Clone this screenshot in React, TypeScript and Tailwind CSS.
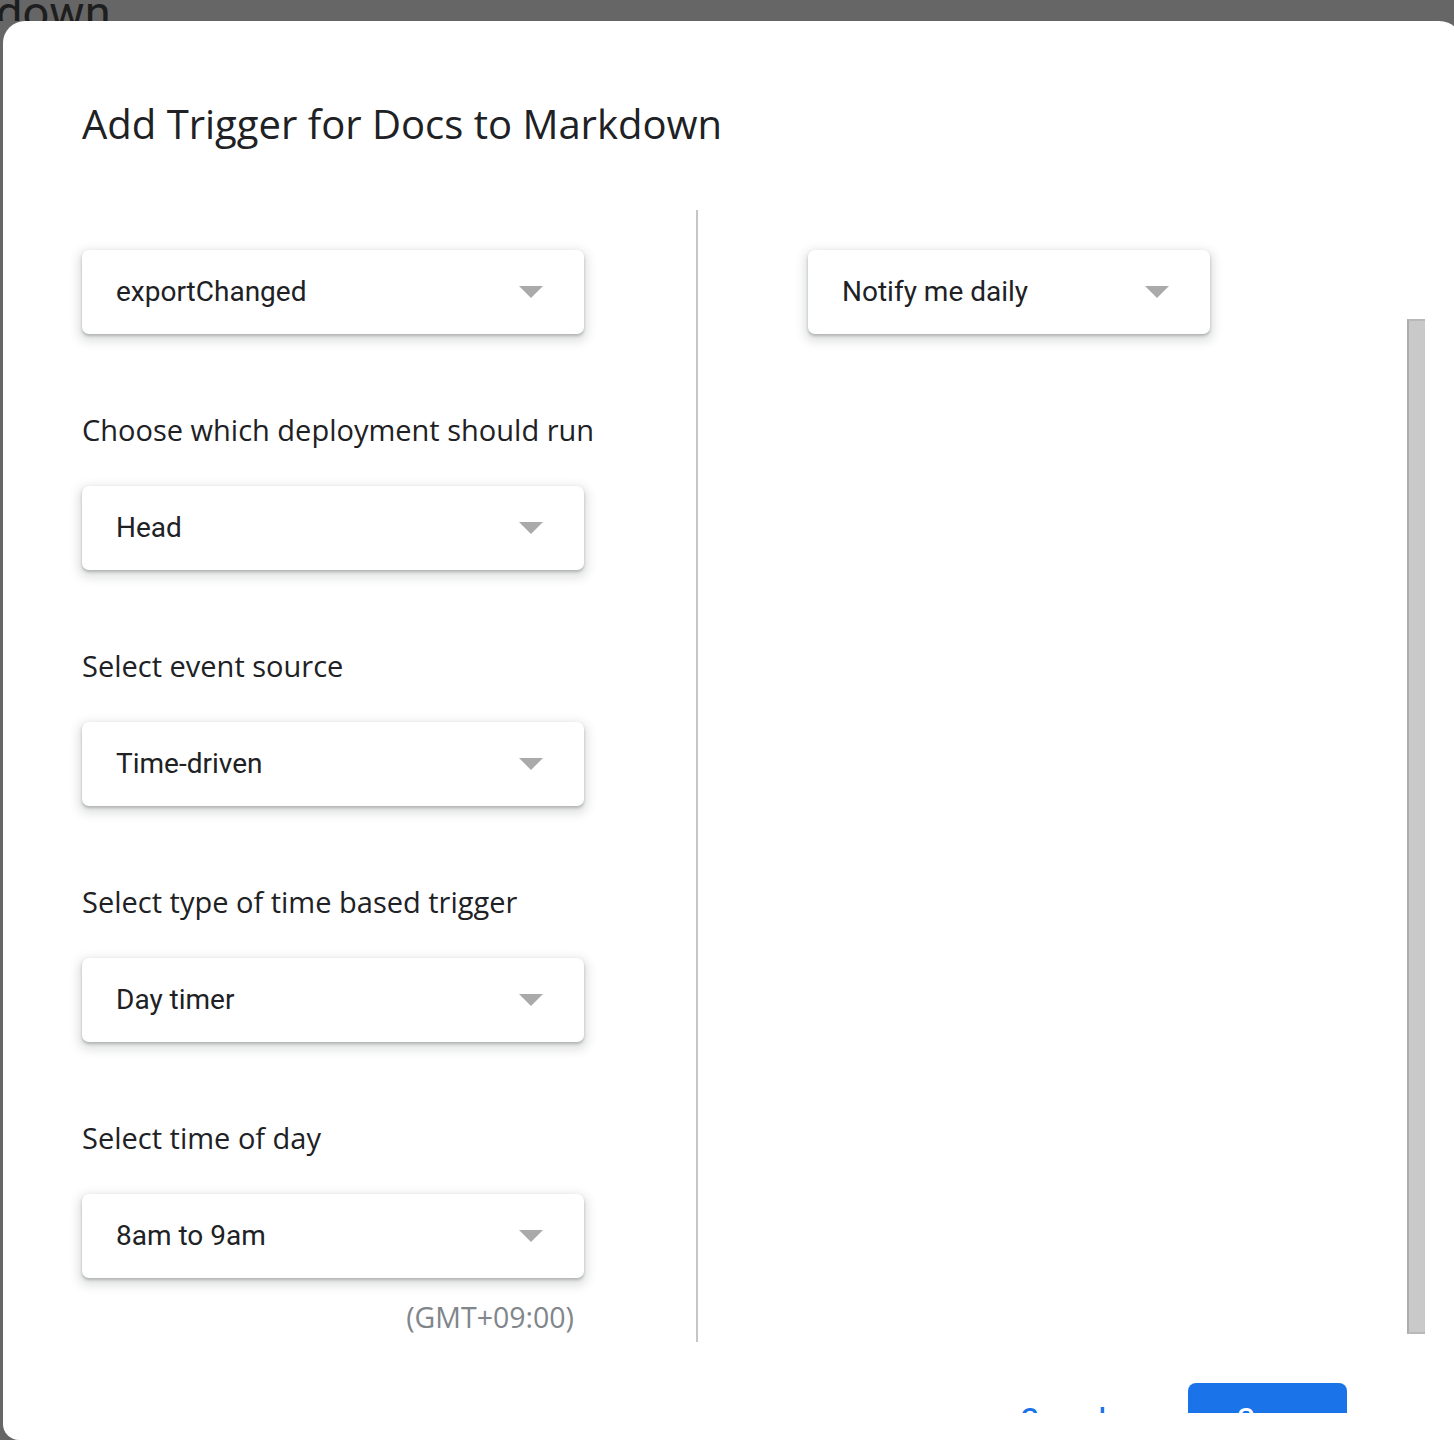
import React from 'react';

const sans = "font-['Roboto','Liberation_Sans',sans-serif]";
const display = "font-['Open_Sans','Liberation_Sans',sans-serif]";

const Arrow = () => (
  <svg width="24" height="12" viewBox="0 0 24 12" className="shrink-0">
    <path d="M0 0 L24 0 L12 12 Z" fill="#aaaaaa" />
  </svg>
);

interface SelectProps {
  value: string;
  width: string;
}

const Select: React.FC<SelectProps> = ({ value, width }) => (
  <div
    className={`${width} h-[84px] rounded-[7px] bg-white flex items-center justify-between pl-[34px] pr-[41px] shadow-[0_2px_3px_rgba(60,64,67,0.3),0_4px_10px_4px_rgba(60,64,67,0.15)]`}
  >
    <span className="text-[28px] text-[#202124] leading-none">{value}</span>
    <Arrow />
  </div>
);

const Label: React.FC<{ children: React.ReactNode }> = ({ children }) => (
  <div className={`${display} mt-[78px] mb-[38px] h-[36px] leading-[36px] text-[29px] text-[#202124]`}>{children}</div>
);

export default function App() {
  return (
    <div className={`w-[1454px] h-[1440px] overflow-hidden bg-[#666666] ${sans}`}>
      {/* page behind the dialog */}
      <div className="h-[21px] overflow-hidden">
        <div className="-mt-[11px] -ml-[4px] text-[47px] leading-[47px] text-[#1e1e1e]">down</div>
      </div>

      <div className="ml-[3px] w-[1460px] h-[1419px] bg-white rounded-tl-[22px] rounded-tr-[24px] rounded-bl-[16px] flex flex-col">
        <h1 className={`${display} mt-[79px] pl-[79px] h-[48px] leading-[48px] text-[40px] text-[#202124]`}>
          Add Trigger for Docs to Markdown
        </h1>

        <div className="mt-[62px] h-[1132px] flex">
          {/* left column */}
          <div className="pl-[79px] w-[693px] pt-[40px] flex flex-col">
            <Select value="exportChanged" width="w-[502px]" />
            <Label>Choose which deployment should run</Label>
            <Select value="Head" width="w-[502px]" />
            <Label>Select event source</Label>
            <Select value="Time-driven" width="w-[502px]" />
            <Label>Select type of time based trigger</Label>
            <Select value="Day timer" width="w-[502px]" />
            <Label>Select time of day</Label>
            <Select value="8am to 9am" width="w-[502px]" />
            <div className={`${display} mt-[21px] w-[502px] pr-[10px] text-right h-[36px] leading-[36px] text-[28.5px] text-[#80868b]`}>
              (GMT+09:00)
            </div>
          </div>

          <div className="w-[2px] h-full bg-[#c4c7ca]" />

          {/* right column */}
          <div className="w-[709px] pl-[110px] pt-[40px]">
            <Select value="Notify me daily" width="w-[402px]" />
          </div>

          <div className="mt-[109px] w-[18px] h-[1015px] bg-[#c9c9c9] border-l-[2px] border-t-[2px] border-b-[2px] border-l-[#acacac] border-t-[#b8b8b8] border-b-[#b8b8b8]" />
        </div>

        {/* footer, clipped by the dialog scroll area */}
        <div className="h-[71px] overflow-hidden flex justify-end items-start pr-[116px] pt-[41px]">
          <button className="h-[72px] px-[6px] text-[28px] font-medium text-[#1a73e8] mr-[76px]">Cancel</button>
          <button className="h-[72px] w-[159px] rounded-[8px] bg-[#1a73e8] text-[28px] font-medium text-white">Save</button>
        </div>
      </div>
    </div>
  );
}
